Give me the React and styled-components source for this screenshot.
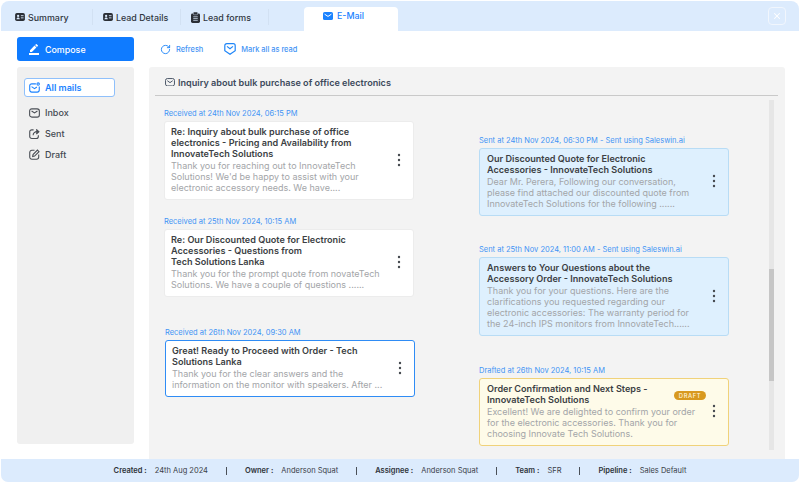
import React from 'react'
import styled, { createGlobalStyle } from 'styled-components'
import { RotateCw, X } from 'lucide-react'
import { MdBorderColor } from 'react-icons/md'

const GlobalStyle = createGlobalStyle`
  html, body {
    margin: 0;
    padding: 0;
    background: #fff;
  }
  body {
    font-family: Inter, "Noto Sans", sans-serif;
  }
  * {
    box-sizing: border-box;
  }
`

const Page = styled.div`
  width: 801px;
  height: 483px;
  padding: 1px 2px 1px 1px;
  display: flex;
  flex-direction: column;
  overflow: hidden;
`

const TopBar = styled.header`
  height: 30px;
  flex: none;
  display: flex;
  align-items: flex-end;
  background: #dcebfd;
  border-radius: 8px 8px 0 0;
  padding: 0 13px 0 4px;
`

const Tab = styled.div`
  width: 88px;
  height: 16px;
  margin-bottom: 6px;
  display: flex;
  align-items: center;
  gap: 3px;
  padding-left: 10px;
  font-size: 8.9px;
  font-weight: 500;
  color: #2f3640;
  border-right: 1px solid #d2e1f3;
`

const ActiveTab = styled.div`
  width: 94px;
  height: 24px;
  margin-left: 35px;
  display: flex;
  align-items: center;
  gap: 4px;
  padding: 0 0 7px 19px;
  background: #fff;
  border-radius: 4px 4px 0 0;
  font-size: 8.9px;
  font-weight: 500;
  color: #1a82ff;
`

const CloseButton = styled.button`
  width: 18px;
  height: 18px;
  margin: 0 0 6px auto;
  padding: 0;
  display: flex;
  align-items: center;
  justify-content: center;
  color: #fff;
  background: transparent;
  border: 1px solid #f1f6fd;
  border-radius: 4px;
`

const Body = styled.div`
  flex: 1;
  min-height: 0;
  display: flex;
  gap: 15px;
  padding: 6px 14px 0 16px;
`

const Side = styled.aside`
  width: 117px;
  flex: none;
  display: flex;
  flex-direction: column;
  gap: 6px;
  padding-bottom: 15px;
`

const Compose = styled.button`
  height: 24px;
  display: flex;
  align-items: center;
  gap: 5px;
  padding: 0 0 0 11px;
  border: 0;
  border-radius: 3px;
  background: #0f7bff;
  color: #fff;
  font-family: inherit;
  font-size: 8.9px;
  font-weight: 500;
`

const SideNav = styled.nav`
  flex: 1;
  display: flex;
  flex-direction: column;
  padding: 11px 19px 0 7px;
  background: #f0f0f0;
  border-radius: 3px;
`

const NavItem = styled.div`
  height: 19px;
  margin-bottom: ${p => p.$active ? '6px' : '2px'};
  display: flex;
  align-items: center;
  gap: 5px;
  padding-left: 4px;
  font-size: 9px;
  font-weight: ${p => p.$active ? 600 : 500};
  color: ${p => p.$active ? '#1a82ff' : '#444a52'};
  background: ${p => p.$active ? '#fff' : 'transparent'};
  border: 1px solid ${p => p.$active ? '#8fc0fb' : 'transparent'};
  border-radius: 3px;
`

const NavIcon = styled.span`
  width: 11px;
  flex: none;
  display: flex;
  justify-content: center;
`

const Main = styled.main`
  flex: 1;
  min-width: 0;
  display: flex;
  flex-direction: column;
`

const Toolbar = styled.div`
  height: 30px;
  flex: none;
  display: flex;
  align-items: center;
  gap: 21px;
  padding: 0 0 6px 11px;
`

const ToolButton = styled.div`
  display: flex;
  align-items: center;
  gap: 5px;
  font-size: 7.4px;
  font-weight: 500;
  color: #3f93f5;
`

const Panel = styled.section`
  flex: 1;
  min-height: 0;
  display: flex;
  flex-direction: column;
  padding: 0 7px 0 6px;
  background: #f3f3f3;
  border-radius: 3px 3px 0 0;
`

const Subject = styled.div`
  height: 29px;
  flex: none;
  display: flex;
  align-items: center;
  gap: 3px;
  padding: 2px 0 0 10px;
  border-bottom: 1px solid #c9c9c9;
  font-size: 9.1px;
  font-weight: 600;
  color: #3d4a5c;
`

const Thread = styled.div`
  flex: 1;
  min-height: 0;
  display: flex;
  padding-left: 9px;
  overflow: hidden;
`

const Column = styled.div`
  width: 251px;
  flex: none;
  margin-right: ${p => p.$after}px;
  padding-top: ${p => p.$top}px;
`

const Group = styled.div`
  width: 251px;
  padding-top: ${p => p.$gap}px;
  padding-left: ${p => p.$inset || 0}px;
`

const Stamp = styled.div`
  height: 11px;
  margin-bottom: 2px;
  font-size: 7.5px;
  line-height: 11px;
  white-space: nowrap;
  color: #3f93f5;
`

const Card = styled.article`
  position: relative;
  width: 250px;
  display: flex;
  align-items: center;
  padding: 4px 12px 6px ${p => p.$variant === 'sent' || p.$variant === 'draft' ? 7 : 6}px;
  border-radius: 3px;
  border: ${p => p.$variant === 'selected' ? '1.5px solid #2f8cf5' : p.$variant === 'sent' ? '1px solid #b8dcf5' : p.$variant === 'draft' ? '1px solid #f0d27a' : '1px solid #ececec'};
  background: ${p => p.$variant === 'sent' ? '#def0fe' : p.$variant === 'draft' ? '#fefbe9' : '#fff'};
`

const CardText = styled.div`
  flex: 1;
  min-width: 0;
  white-space: nowrap;
`

const Title = styled.div`
  margin-bottom: 1px;
  font-size: 9.1px;
  font-weight: 600;
  line-height: 11px;
  color: #3c3f44;
`

const Preview = styled.div`
  font-size: 9px;
  line-height: 11px;
  color: #a3a5a8;
`

const DraftBadge = styled.span`
  position: absolute;
  top: 12px;
  right: 22px;
  width: 32px;
  height: 9px;
  display: flex;
  align-items: center;
  justify-content: center;
  border-radius: 5px;
  background: #d8991f;
  color: #fff5dc;
  font-size: 5.8px;
  font-weight: 500;
  letter-spacing: 0.6px;
`

const ScrollTrack = styled.div`
  width: 5px;
  flex: none;
  height: 350px;
  margin-top: 4px;
  padding-top: 169px;
  background: #e6e6e6;
`

const ScrollThumb = styled.div`
  height: 112px;
  background: #c6c6c6;
`

const Footer = styled.footer`
  height: 23px;
  flex: none;
  display: flex;
  align-items: center;
  justify-content: center;
  gap: 18px;
  background: #dcebfd;
  border-radius: 0 0 7px 7px;
  font-size: 7.5px;
  color: #3a4048;
`

const Meta = styled.span`
  display: flex;
  gap: 8px;
  white-space: nowrap;
`

const MetaKey = styled.b`
  font-weight: 600;
  color: #2d3238;
`

const Bar = styled.span`
  width: 1px;
  height: 8px;
  background: #4a5058;
`

const Dots = () => (
  <svg width="4" height="14" viewBox="0 0 4 14" style={{ flex: 'none' }}>
    <circle cx="2" cy="2" r="1.2" fill="#45494f" />
    <circle cx="2" cy="7" r="1.2" fill="#45494f" />
    <circle cx="2" cy="12" r="1.2" fill="#45494f" />
  </svg>
)

const IdCard = () => (
  <svg width="10" height="8" viewBox="0 0 11 9">
    <rect width="11" height="9" rx="2" fill="#2b2f36" />
    <circle cx="3.4" cy="3.3" r="1.3" fill="#dcebfd" />
    <path d="M1.6 7c.2-1.3 1-1.8 1.8-1.8S5 5.7 5.2 7z" fill="#dcebfd" />
    <path d="M6.5 3h3M6.5 5.5h3" stroke="#dcebfd" strokeWidth="1" />
  </svg>
)

const Clipboard = () => (
  <svg width="9" height="11" viewBox="0 0 10 12">
    <rect y="1.5" width="10" height="10.5" rx="1.6" fill="#2b2f36" />
    <rect x="2.6" y="0" width="4.8" height="3" rx="0.8" fill="#2b2f36" stroke="#dcebfd" strokeWidth="0.5" />
    <path d="M2.5 5.2h5M2.5 7.2h5M2.5 9.2h5" stroke="#dcebfd" strokeWidth="0.8" />
  </svg>
)

const MailSolid = () => (
  <svg width="10" height="8" viewBox="0 0 10 8">
    <rect width="10" height="8" rx="1.6" fill="#1a82ff" />
    <path d="M1.6 2.2 5 4.4l3.4-2.2" fill="none" stroke="#fff" strokeWidth="1" />
  </svg>
)

const MailLine = ({ color = '#3d4a5c', size = 11 }) => (
  <svg width={size} height={size * 0.85} viewBox="0 0 13 11" fill="none" stroke={color} strokeWidth="1.2">
    <rect x="0.7" y="0.7" width="11.6" height="9.6" rx="2.4" />
    <path d="M3 3.5 6.5 6 10 3.5" />
  </svg>
)

const AllMails = () => (
  <svg width="11" height="11" viewBox="0 0 12 12" fill="none" stroke="#1a82ff" strokeWidth="1.2">
    <path d="M7.5 2H3a2.2 2.2 0 0 0-2.2 2.2v4.6A2.2 2.2 0 0 0 3 11h6a2.2 2.2 0 0 0 2.2-2.2V5" />
    <path d="M2.8 5 6 7.2 8.6 5.4" />
    <circle cx="10" cy="2.2" r="1.3" />
  </svg>
)

const Inbox = () => (
  <svg width="11" height="10" viewBox="0 0 12 10.5" fill="none" stroke="#4a4e55" strokeWidth="1.2">
    <rect x="0.7" y="0.7" width="10.6" height="9" rx="2.4" />
    <path d="M2.8 3 6 5.2 9.2 3" />
  </svg>
)

const Sent = () => (
  <svg width="11" height="11" viewBox="0 0 12 12" fill="none" stroke="#4a4e55" strokeWidth="1.2">
    <path d="M5 2H3a2.2 2.2 0 0 0-2.2 2.2v5A2.2 2.2 0 0 0 3 11.4h5a2.2 2.2 0 0 0 2.2-2.2V8" />
    <path d="M4.5 8c0-2.6 1.8-4 4.5-4" />
    <path d="M8 1.4 10.8 4 8 6.6" fill="#4a4e55" />
  </svg>
)

const Draft = () => (
  <svg width="11" height="11" viewBox="0 0 12 12" fill="none" stroke="#4a4e55" strokeWidth="1.2">
    <path d="M6 1.4H3.2A2.4 2.4 0 0 0 .8 3.8v5a2.4 2.4 0 0 0 2.4 2.4h5a2.4 2.4 0 0 0 2.4-2.4V6" />
    <path d="M4 8.2 4.4 6 9.2 1.2l1.7 1.7L6.1 7.7z" />
  </svg>
)

const MarkRead = () => (
  <svg width="12" height="12" viewBox="0 0 12 12" fill="none" stroke="#1f86f8" strokeWidth="1.2">
    <path d="M2.8.7h6.4a2 2 0 0 1 2 2v5.1L6 11.3.8 7.8V2.7a2 2 0 0 1 2-2z" />
    <path d="M3 3.4 6 5.8l3-2.4" />
  </svg>
)

const received = [
  {
    stamp: 'Received at 24th Nov 2024, 06:15 PM',
    gap: 0,
    title: ['Re: Inquiry about bulk purchase of office', 'electronics - Pricing and Availability from', 'InnovateTech Solutions'],
    preview: ['Thank you for reaching out to InnovateTech', "Solutions! We'd be happy to assist with your", 'electronic accessory needs. We have....']
  },
  {
    stamp: 'Received at 25th Nov 2024, 10:15 AM',
    gap: 16,
    title: ['Re: Our Discounted Quote for Electronic', 'Accessories - Questions from', 'Tech Solutions Lanka'],
    preview: ['Thank you for the prompt quote from novateTech', 'Solutions. We have a couple of questions ......']
  },
  {
    stamp: 'Received at 26th Nov 2024, 09:30 AM',
    gap: 30,
    inset: 1,
    variant: 'selected',
    title: ['Great! Ready to Proceed with Order - Tech', 'Solutions Lanka'],
    preview: ['Thank you for the clear answers and the', 'information on the monitor with speakers. After ...']
  }
]

const sent = [
  {
    stamp: 'Sent at 24th Nov 2024, 06:30 PM - Sent using Saleswin.ai',
    gap: 0,
    variant: 'sent',
    title: ['Our Discounted Quote for Electronic', 'Accessories - InnovateTech Solutions'],
    preview: ['Dear Mr. Perera, Following our conversation,', 'please find attached our discounted quote from', 'InnovateTech Solutions for the following ......']
  },
  {
    stamp: 'Sent at 25th Nov 2024, 11:00 AM - Sent using Saleswin.ai',
    gap: 28,
    variant: 'sent',
    title: ['Answers to Your Questions about the', 'Accessory Order - InnovateTech Solutions'],
    preview: ['Thank you for your questions. Here are the', 'clarifications you requested regarding our', 'electronic accessories: The warranty period for', 'the 24-inch IPS monitors from InnovateTech......']
  },
  {
    stamp: 'Drafted at 26th Nov 2024, 10:15 AM',
    gap: 29,
    variant: 'draft',
    title: ['Order Confirmation and Next Steps -', 'InnovateTech Solutions'],
    preview: ['Excellent! We are delighted to confirm your order', 'for the electronic accessories. Thank you for', 'choosing Innovate Tech Solutions.']
  }
]

const meta = [
  ['Created :', '24th Aug 2024'],
  ['Owner :', 'Anderson Squat'],
  ['Assignee :', 'Anderson Squat'],
  ['Team :', 'SFR'],
  ['Pipeline :', 'Sales Default']
]

const MailCard = ({ mail }) => (
  <Group $gap={mail.gap} $inset={mail.inset}>
    <Stamp>{mail.stamp}</Stamp>
    <Card $variant={mail.variant}>
      <CardText>
        <Title>{mail.title.map(line => <div key={line}>{line}</div>)}</Title>
        <Preview>{mail.preview.map(line => <div key={line}>{line}</div>)}</Preview>
      </CardText>
      {mail.variant === 'draft' && <DraftBadge>DRAFT</DraftBadge>}
      <Dots />
    </Card>
  </Group>
)

export default function App() {
  return (
    <Page>
      <GlobalStyle />
      <TopBar>
        <Tab><IdCard />Summary</Tab>
        <Tab><IdCard />Lead Details</Tab>
        <Tab><Clipboard />Lead forms</Tab>
        <ActiveTab><MailSolid />E-Mail</ActiveTab>
        <CloseButton><X size={10} strokeWidth={2.5} /></CloseButton>
      </TopBar>
      <Body>
        <Side>
          <Compose><MdBorderColor size={12} />Compose</Compose>
          <SideNav>
            <NavItem $active><NavIcon><AllMails /></NavIcon>All mails</NavItem>
            <NavItem><NavIcon><Inbox /></NavIcon>Inbox</NavItem>
            <NavItem><NavIcon><Sent /></NavIcon>Sent</NavItem>
            <NavItem><NavIcon><Draft /></NavIcon>Draft</NavItem>
          </SideNav>
        </Side>
        <Main>
          <Toolbar>
            <ToolButton><RotateCw size={11} strokeWidth={2} color="#1f86f8" />Refresh</ToolButton>
            <ToolButton><MarkRead />Mark all as read</ToolButton>
          </Toolbar>
          <Panel>
            <Subject><MailLine size={10} />Inquiry about bulk purchase of office electronics</Subject>
            <Thread>
              <Column $top={12} $after={64}>
                {received.map(mail => <MailCard key={mail.stamp} mail={mail} />)}
              </Column>
              <Column $top={39} $after={39}>
                {sent.map(mail => <MailCard key={mail.stamp} mail={mail} />)}
              </Column>
              <ScrollTrack><ScrollThumb /></ScrollTrack>
            </Thread>
          </Panel>
        </Main>
      </Body>
      <Footer>
        {meta.map(([key, value], index) => (
          <React.Fragment key={key}>
            {index > 0 && <Bar />}
            <Meta><MetaKey>{key}</MetaKey>{value}</Meta>
          </React.Fragment>
        ))}
      </Footer>
    </Page>
  )
}
